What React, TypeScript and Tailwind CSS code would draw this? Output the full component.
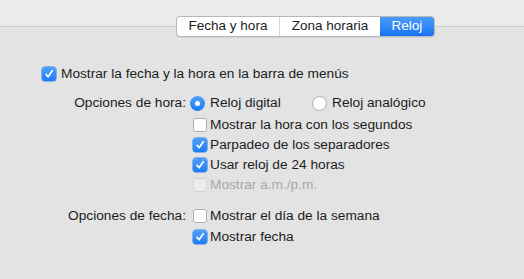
import React from 'react';

const font = { fontFamily: '"Liberation Sans", Arial, sans-serif' };

function Check({ checked = false, disabled = false }: { checked?: boolean; disabled?: boolean }) {
  if (checked) {
    return (
      <span className="flex h-[14px] w-[14px] shrink-0 items-center justify-center rounded-[3px] bg-gradient-to-b from-[#4fa0fb] to-[#1a7bf6] shadow-[0_0_0_0.5px_#2a76e0]">
        <svg width="10" height="10" viewBox="0 0 10 10">
          <path d="M2 5.3 L4.1 7.8 L8.2 1.8" fill="none" stroke="white" strokeWidth="1.7" strokeLinecap="round" strokeLinejoin="round" />
        </svg>
      </span>
    );
  }
  return (
    <span
      className={
        disabled
          ? 'h-[14px] w-[14px] shrink-0 rounded-[3px] border border-[#d3d3d3] bg-[#ececec]'
          : 'h-[14px] w-[14px] shrink-0 rounded-[3px] border border-[#aeaeae] bg-white'
      }
    />
  );
}

function Radio({ on = false }: { on?: boolean }) {
  if (on) {
    return (
      <span className="flex h-[15px] w-[15px] shrink-0 items-center justify-center rounded-full bg-gradient-to-b from-[#4fa0fb] to-[#1a7bf6]">
        <span className="h-[5px] w-[5px] rounded-full bg-white" />
      </span>
    );
  }
  return <span className="h-[15px] w-[15px] shrink-0 rounded-full border border-[#aeaeae] bg-white" />;
}

function Row({ children, dim = false }: { children: React.ReactNode; dim?: boolean }) {
  return (
    <div className={`flex h-[20px] items-center gap-[3px] ${dim ? 'text-[#a8a8a8]' : 'text-[#1c1c1c]'}`}>{children}</div>
  );
}

export default function App() {
  return (
    <div className="h-[279px] w-[524px] overflow-hidden bg-[#e3e3e3] text-[13.7px]" style={font}>
      <div className="h-[27px] border-b border-[#cfcfcf] bg-[#ebebeb]" />

      {/* Tabs */}
      <div className="-mt-[11px] ml-[176px] flex h-[21px] w-[259px] overflow-hidden rounded-[4px] border border-[#b8b8b8] bg-white text-[13.5px] shadow-[0_0.5px_0.5px_rgba(0,0,0,0.12)]">
        <div className="flex w-[103px] items-center justify-center border-r border-[#d6d6d6] text-[#1c1c1c]">Fecha y hora</div>
        <div className="flex w-[100px] items-center justify-center text-[#1c1c1c]">Zona horaria</div>
        <div className="flex flex-1 items-center justify-center bg-gradient-to-b from-[#4a9cfb] to-[#1572f6] text-white">Reloj</div>
      </div>

      <div className="ml-[42px] mt-[27px]">
        <Row>
          <Check checked />
          <span className="ml-[2px]">Mostrar la fecha y la hora en la barra de menús</span>
        </Row>
      </div>

      <div className="mt-[9px] flex">
        <div className="w-[190px] pr-[4px] text-right text-[#1c1c1c]">
          <div className="flex h-[20px] items-center justify-end">Opciones de hora:</div>
        </div>
        <div className="flex flex-col">
          <div className="flex h-[20px] items-center">
            <div className="flex w-[122px] items-center gap-[5px]">
              <Radio on />
              <span className="text-[#1c1c1c]">Reloj digital</span>
            </div>
            <div className="flex items-center gap-[5px]">
              <Radio />
              <span className="text-[#1c1c1c]">Reloj analógico</span>
            </div>
          </div>
          <div className="mt-[2px] ml-[3px] flex flex-col">
            <Row>
              <Check />
              <span>Mostrar la hora con los segundos</span>
            </Row>
            <Row>
              <Check checked />
              <span>Parpadeo de los separadores</span>
            </Row>
            <Row>
              <Check checked />
              <span>Usar reloj de 24 horas</span>
            </Row>
            <Row dim>
              <Check disabled />
              <span>Mostrar a.m./p.m.</span>
            </Row>
          </div>
        </div>
      </div>

      <div className="mt-[11px] flex">
        <div className="w-[193px] pr-[7px] text-right text-[#1c1c1c]">
          <div className="flex h-[20px] items-center justify-end">Opciones de fecha:</div>
        </div>
        <div className="flex flex-col gap-[1px]">
          <Row>
            <Check />
            <span>Mostrar el día de la semana</span>
          </Row>
          <Row>
            <Check checked />
            <span>Mostrar fecha</span>
          </Row>
        </div>
      </div>
    </div>
  );
}
